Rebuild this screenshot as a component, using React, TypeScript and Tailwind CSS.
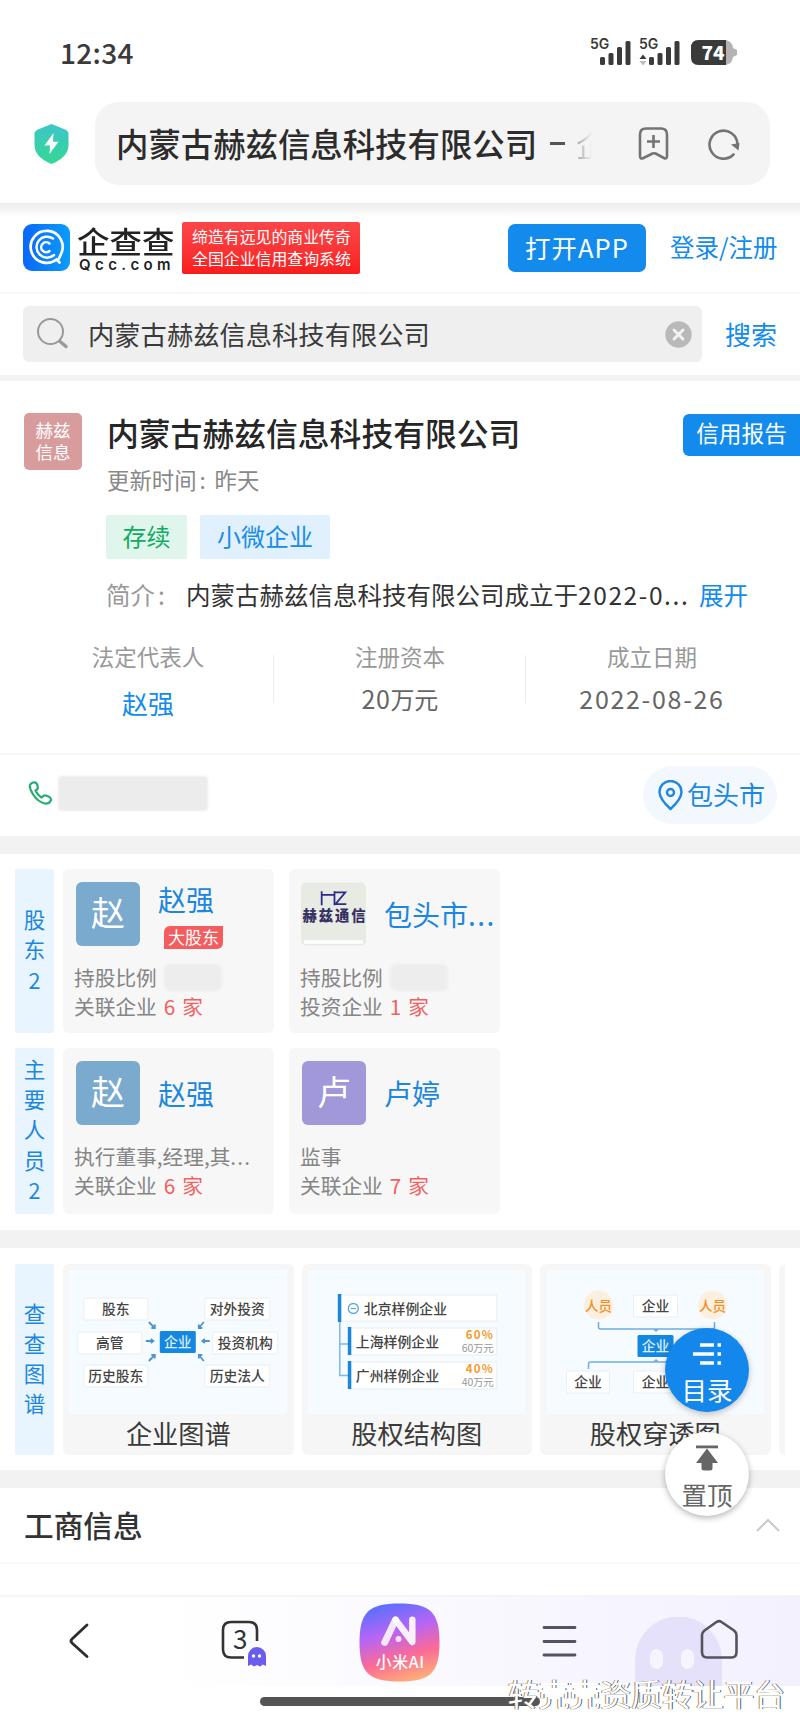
import { ReactNode } from "react";

type PersonCardProps = {
  avatar: ReactNode;
  name: ReactNode;
  badge?: string;
  line: ReactNode;
  masked?: boolean;
  relation: string;
  count: number;
};

const COMPANY = "内蒙古赫兹信息科技有限公司";

const SignalIcon = ({ data }: { data?: boolean }) => (
  <svg className="overflow-visible" width="44" height="32" viewBox="0 0 44 32">
    <text x="0" y="9.500" fontSize="14" fontWeight="600" fill="#3a3a3a" className="font-['Inter']">
      5G
    </text>
    {data && (
      <>
        <path d="M0.500 20 H7.500 L4 15.500 Z" fill="#3a3a3a" />
        <path d="M0.500 22 H7.500 L4 26.500 Z" fill="#bbb" />
      </>
    )}
    <rect x="10" y="18" width="5" height="8" rx="1.500" fill="#3a3a3a" />
    <rect x="18.500" y="14" width="5" height="12" rx="1.500" fill="#3a3a3a" />
    <rect x="27" y="8" width="5" height="18" rx="1.500" fill="#3a3a3a" />
    <rect x="35.500" y="2" width="5" height="24" rx="1.500" fill="#3a3a3a" />
  </svg>
);

const StatusBar = () => (
  <div className="h-[102px] shrink-0 flex items-start justify-between pl-[60px] pr-[62px]">
    <p className="mt-[38px] text-[28px] leading-[28px] font-medium tracking-[0.300px] text-[#3a3a3a]">12:34</p>
    <div className="mt-[39px] flex">
      <SignalIcon />
      <div className="ml-[5px]">
        <SignalIcon data />
      </div>
      <svg className="ml-[7px]" width="48" height="27" viewBox="0 0 48 27">
        <path d="M8 1 H34 Q42 1 43 9 L47 11 V16 L43 18 Q42 26 34 26 H8 Q1 26 1 18 V9 Q1 1 8 1Z" fill="#b3b3b3" />
        <path d="M9 1 H36 V26 H9 Q1 26 1 18 V9 Q1 1 9 1Z" fill="#3a3a3a" />
        <text x="11.500" y="20.500" fontSize="19" fontWeight="800" fill="#fff" textLength="23">
          74
        </text>
      </svg>
    </div>
  </div>
);

const AddressBar = () => (
  <div className="h-[101px] shrink-0 flex items-start pl-[34px]">
    <svg className="mt-[21px]" width="35" height="42" viewBox="0 0 35 42">
      <defs>
        <linearGradient id="shield" x1="0" y1="0" x2="0" y2="1">
          <stop offset="0" stopColor="#3cc6c9" />
          <stop offset="1" stopColor="#35d793" />
        </linearGradient>
      </defs>
      <path
        d="M17.500 1 L31 6.500 Q34.500 8 34.500 11 V22 Q34.500 34 17.500 41 Q0.500 34 0.500 22 V11 Q0.500 8 4 6.500Z"
        fill="url(#shield)"
      />
      <path d="M19.500 10 L10.500 22.500 H16 L15.500 31 L24.500 18.800 H19Z" fill="#fff" />
    </svg>
    <div className="ml-[26px] w-[675px] h-[83px] rounded-[24px] bg-[#f4f4f4] flex items-center pl-[21px]">
      <p className="text-[32.400px] leading-none font-medium text-[#2c2c2c] whitespace-nowrap">{COMPANY}</p>
      <span className="ml-[13px] w-[15px] h-[3px] bg-[#555]" />
      <p className="ml-[11px] w-[32px] -mr-[16px] text-[30px] leading-[40px] text-transparent bg-clip-text bg-gradient-to-r from-[#a5a5a5] to-[#f4f4f4] to-50% whitespace-nowrap">
        企
      </p>
      <svg className="ml-[46px]" width="32" height="36" viewBox="0 0 32 36" fill="none" stroke="#747474" strokeWidth="2.600">
        <path d="M8 2.500 H23 Q29 2.500 29 8.500 V30 Q29 33.500 26 32 L17.500 27.500 Q16 27 14.500 27.500 L5.500 32 Q2 33.500 2 30 V8.500 Q2 2.500 8 2.500Z" />
        <path d="M15.500 9 V22 M9 15.500 H22" />
      </svg>
      <svg className="ml-[37px]" width="34" height="34" viewBox="0 0 34 34" fill="none">
        <path d="M26.500 27.500 A14 14 0 1 1 30.500 17" stroke="#747474" strokeWidth="2.600" strokeLinecap="round" />
        <path d="M24 17.500 L32.500 16 L31.500 23.500Z" fill="#747474" />
      </svg>
    </div>
  </div>
);

const SiteHeader = () => (
  <div className="h-[91px] shrink-0 flex items-start pl-[23px] pt-[19px] border-b-2 border-[#f7f7f7] bg-gradient-to-b from-[#ebebeb] from-0% to-white to-[14px]">
    <svg className="mt-[2px]" width="47" height="47" viewBox="0 0 47 47" fill="none">
      <defs>
        <linearGradient id="logo" x1="0" y1="0" x2="1" y2="0">
          <stop offset="0" stopColor="#0b66fb" />
          <stop offset="1" stopColor="#0a9dfb" />
        </linearGradient>
      </defs>
      <rect width="47" height="47" rx="9" fill="url(#logo)" />
      <g stroke="#fff" strokeLinecap="round">
        <path d="M36.500 38.500 L33.500 35.500 A16 16 0 1 1 38 30 L36 34.500" strokeWidth="2.700" />
        <path d="M30 14.500 A10.500 10.500 0 1 0 31 31" strokeWidth="2.500" />
        <path d="M26.500 19.500 A5 5 0 1 0 26.500 27" strokeWidth="2.500" />
      </g>
    </svg>
    <div className="ml-[7px] mt-[3px] w-[99px]">
      <p className="text-[32.500px] leading-[33px] h-[33px] origin-top scale-y-90 font-medium text-[#222] whitespace-nowrap">企查查</p>
      <p className="font-['Inter'] text-[15px] leading-[13px] pl-[2px] font-semibold tracking-[4.400px] text-[#222]">Qcc.com</p>
    </div>
    <div className="ml-[6px] w-[178px] h-[52px] rounded-[2px] bg-gradient-to-b from-[#fc4649] to-[#f81c1c] text-white text-[15.900px] leading-[22px] pl-[10px] pt-[4px] whitespace-nowrap">
      <p>缔造有远见的商业传奇</p>
      <p>全国企业信用查询系统</p>
    </div>
    <button className="ml-[148px] mt-[2px] w-[138px] h-[48px] rounded-[7px] bg-[#128bed] text-white text-[25.500px] leading-none pb-[2px] tracking-[1px]">
      打开APP
    </button>
    <a className="ml-[24px] mt-[13px] text-[24.500px] leading-none text-[#128bed] whitespace-nowrap">登录/注册</a>
  </div>
);

const SearchRow = () => (
  <div className="h-[87px] shrink-0 flex items-start pl-[23px] pt-[12px] border-b-[6px] border-[#f2f2f2]">
    <div className="w-[679px] h-[56px] rounded-[6px] bg-[#efefef] flex items-center pl-[13px]">
      <svg width="34" height="34" viewBox="0 0 34 34" fill="none" stroke="#999">
        <circle cx="14.500" cy="14.500" r="12.500" strokeWidth="2" />
        <path d="M24 24.500 L30 29.500" strokeWidth="3.500" strokeLinecap="round" />
      </svg>
      <p className="ml-[18px] text-[26.300px] leading-none text-[#3a3a3a]">{COMPANY}</p>
      <svg className="ml-auto mr-[10px]" width="27" height="27" viewBox="0 0 27 27">
        <circle cx="13.500" cy="13.500" r="13.200" fill="#b9b9b9" />
        <path d="M9 9 L18 18 M18 9 L9 18" stroke="#f2f2f2" strokeWidth="3" strokeLinecap="round" />
      </svg>
    </div>
    <a className="ml-[23px] mt-[15px] text-[26px] leading-none text-[#128bed]">搜索</a>
  </div>
);

const Fact = ({ label, children, link }: { label: string; children: ReactNode; link?: boolean }) => (
  <div className="w-[252px] flex flex-col items-center">
    <p className="text-[22.500px] leading-[22px] text-[#999]">{label}</p>
    {link ? (
      <a className="mt-[23px] text-[26px] leading-[26px] text-[#128bed]">{children}</a>
    ) : (
      <p className="mt-[19px] text-[25px] leading-[25px] text-[#666]">{children}</p>
    )}
  </div>
);

const CompanySummary = () => (
  <div className="h-[374px] shrink-0 border-b-2 border-[#f7f7f7]">
    <div className="flex pt-[32px] pl-[24px]">
      <div className="w-[58px] h-[57px] rounded-[5px] bg-[#d89c9d] text-white text-[17.500px] leading-[22px] text-center pt-[6px]">
        <p>赫兹</p>
        <p>信息</p>
      </div>
      <div className="ml-[25px] w-[576px] pt-[3px]">
        <h1 className="text-[31.800px] leading-[32px] font-medium text-[#262626]">{COMPANY}</h1>
        <p className="mt-[19px] text-[22.400px] leading-[24px] text-[#888]">
          更新时间<span className="inline-block w-[18px] pl-[3px]">:</span>昨天
        </p>
      </div>
      <button className="mt-px w-[117px] h-[42px] rounded-l-[6px] bg-[#128bed] text-white text-[22.700px] leading-none pb-[3px]">
        信用报告
      </button>
    </div>
    <div className="ml-[106px] mt-[24px] flex gap-[13px] text-[24px] leading-[41px] text-center">
      <span className="w-[81px] h-[44px] rounded-[2px] bg-[#e0f5eb] text-[#12ab63]">存续</span>
      <span className="w-[130px] h-[44px] rounded-[2px] bg-[#e0f0fc] text-[#1a8ce8]">小微企业</span>
    </div>
    <div className="ml-[106px] mt-[23px] flex text-[24.500px] leading-[25px] whitespace-nowrap">
      <span className="w-[80px] text-[#999]">
        简介<span className="pl-[3px]">:</span>
      </span>
      <span className="w-[513px] text-[#333]">
        {COMPANY}成立于<span className="tracking-[1.600px]">2022-0...</span>
      </span>
      <a className="text-[#128bed]">展开</a>
    </div>
    <div className="mt-[38px] ml-[22px] flex">
      <Fact label="法定代表人" link>
        赵强
      </Fact>
      <span className="-ml-px mt-[10px] w-px h-[48px] bg-[#ececec]" />
      <Fact label="注册资本">
        <span className="tracking-[0.500px]">20</span>
        <span className="text-[24px]">万元</span>
      </Fact>
      <span className="-ml-px mt-[10px] w-px h-[48px] bg-[#ececec]" />
      <Fact label="成立日期">
        <span className="tracking-[1.700px]">2022-08-26</span>
      </Fact>
    </div>
  </div>
);

const ContactRow = () => (
  <div className="h-[81px] shrink-0 flex items-start pl-[28px] pt-[11px]">
    <svg className="mt-[15px]" width="25" height="24" viewBox="0 0 25 24" fill="none" stroke="#24ad70" strokeWidth="2.200" strokeLinejoin="round">
      <path d="M5 1.500 Q9 0.500 9.800 6 Q10 8.500 7.500 9.500 Q9.500 14 13.500 16.500 Q15.500 14 18 14.500 Q23.500 16.500 23 19 Q21.500 23 17 22.500 Q10 21 5.500 14 Q1 7 2 4 Q3 2 5 1.500Z" />
    </svg>
    <div className="ml-[5px] mt-[10px] w-[150px] h-[35px] rounded-[4px] bg-[#ececec] blur-[1px]" />
    <div className="ml-[435px] w-[134px] h-[58px] rounded-full bg-[#f2f8fe] flex items-center pl-[15px] text-[#1e88e0]">
      <svg width="25" height="31" viewBox="0 0 25 31" fill="none" stroke="#1e88e0" strokeWidth="2.400">
        <path d="M12.500 29 Q1.500 19 1.500 12 A11 11 0 0 1 23.500 12 Q23.500 19 12.500 29Z" />
        <circle cx="12.500" cy="12.500" r="3.500" />
      </svg>
      <span className="relative -top-[1px] ml-[4px] text-[26px] leading-none">包头市</span>
    </div>
  </div>
);

const Gap = () => <div className="h-[18px] shrink-0 bg-[#f2f2f2]" />;

const SideLabel = ({ text }: { text: string }) => (
  <div className="w-[39px] shrink-0 rounded-[2px] bg-[#e8f4fe] flex flex-col items-center justify-center pb-[3px] text-[21.500px] leading-[30.200px] text-[#1b87dd]">
    {text.split("").map((char, i) => (
      <span key={i}>{char}</span>
    ))}
  </div>
);

const Avatar = ({ char, className }: { char: string; className: string }) => (
  <div className={`ml-px w-[64px] h-[64px] shrink-0 rounded-[6px] text-white text-[34px] leading-[59px] text-center ${className}`}>
    {char}
  </div>
);

const BrandAvatar = () => (
  <svg className="shrink-0" width="65" height="64" viewBox="0 0 66 64">
    <rect width="66" height="64" rx="5" fill="#e7ebe3" />
    <path d="M3 60.500 H63" stroke="#fff" strokeWidth="3.500" />
    <path d="M21 23 V9 M21 12.500 H34 M34 23 V9 M34 10 H45 L35 22 H46" fill="none" stroke="#2d2a8c" strokeWidth="1.800" />
    <text x="1.500" y="39.500" fontSize="14.500" fontWeight="900" fill="#373063" textLength="64">
      赫兹通信
    </text>
  </svg>
);

const PersonCard = ({ avatar, name, badge, line, masked, relation, count }: PersonCardProps) => (
  <div className="w-[211px] shrink-0 rounded-[6px] bg-[#f7f7f7] pl-[12px] pt-[13px] text-[20.700px] text-[#858585]">
    <div className="h-[64px] flex">
      {avatar}
      <div className="w-[120px] ml-[18px] flex flex-col justify-center">
        <p className="text-[28px] leading-[28px] text-[#1b87dd] whitespace-nowrap">{name}</p>
        {badge && (
          <span className="mt-[13px] -mb-[5px] ml-[6px] w-[59px] h-[23px] rounded-tl-[6px] rounded-br-[6px] bg-[#f45c5e] text-white text-[17px] leading-[21px] text-center">
            {badge}
          </span>
        )}
      </div>
    </div>
    <div className="-ml-px mt-[16px] h-[30px] flex items-center leading-[30px] whitespace-nowrap">
      {line}
      {masked && <span className="ml-[7px] w-[58px] h-[27px] rounded-[6px] bg-[#ededed] blur-[1px]" />}
    </div>
    <p className="-ml-px leading-[29px]">
      {relation}
      <span className="ml-[7px] text-[#f2605f]">{count}</span>
      <span className="ml-[7px] text-[#f2605f]">家</span>
    </p>
  </div>
);

type NodeBoxProps = { x: number; y: number; w: number; h?: number; text: string; active?: boolean };

const NodeBox = ({ x, y, w, h = 22, text, active }: NodeBoxProps) => (
  <g>
    <rect x={x} y={y} width={w} height={h} rx="1.500" fill={active ? "#1487e0" : "#fff"} stroke={active ? "none" : "#e8eef2"} />
    <text x={x + w / 2} y={y + h / 2 + 5} fontSize="13.800" fontWeight="500" textAnchor="middle" fill={active ? "#d9eeff" : "#444"}>
      {text}
    </text>
  </g>
);

const RelationDiagram = () => (
  <svg width="218" height="144" viewBox="-0.800 0 218 144">
    <rect x="-1" width="219" height="144" fill="#f6fbff" />
    <NodeBox x={14} y={28} w={64} text="股东" />
    <NodeBox x={8} y={62} w={64} text="高管" />
    <NodeBox x={14} y={95} w={64} text="历史股东" />
    <NodeBox x={135} y={28} w={65} text="对外投资" />
    <NodeBox x={143} y={62} w={65} text="投资机构" />
    <NodeBox x={135} y={95} w={65} text="历史法人" />
    <NodeBox x={90} y={61} w={36} text="企业" active />
    <g stroke="#4a94cf" strokeWidth="1.800" fill="none">
      <path d="M79 52 L85 58 M85 54.500 V58 H81.500" />
      <path d="M76 71 H83 M81 69 L83.500 71 L81 73" />
      <path d="M79 91 L85 85 M81.500 85 H85 V88.500" />
      <path d="M134 52 L129 58 M129 54.500 V58 H132.500" />
      <path d="M140 71 H133 M135 69 L132.500 71 L135 73" />
      <path d="M134 91 L129 85 M132.500 85 H129 V88.500" />
    </g>
  </svg>
);

const EquityDiagram = () => (
  <svg width="218" height="144" viewBox="-0.800 0 218 144">
    <rect x="-1" width="219" height="144" fill="#f6fbff" />
    <g fill="#fff" stroke="#e8eef2">
      <rect x="31" y="25" width="157" height="26" />
      <rect x="41" y="58" width="147" height="27" />
      <rect x="41" y="92" width="147" height="27" />
    </g>
    <path d="M31 52 V105.500 H40 M31 74 H40" fill="none" stroke="#7bb8e8" strokeWidth="1.500" />
    <g fill="#1a86dc">
      <rect x="29" y="24" width="3.500" height="28" />
      <rect x="39" y="57" width="3.500" height="28" />
      <rect x="39" y="91" width="3.500" height="28" />
    </g>
    <circle cx="44.500" cy="38.500" r="5" fill="none" stroke="#5ea5dd" strokeWidth="1.300" />
    <path d="M42 38.500 H47" stroke="#5ea5dd" strokeWidth="1.300" />
    <g fontSize="13.900" fontWeight="500" fill="#444">
      <text x="55" y="44">北京样例企业</text>
      <text x="47" y="77">上海样例企业</text>
      <text x="47" y="111">广州样例企业</text>
    </g>
    <g fontSize="11.500" fontWeight="700" fill="#f39a2e">
      <text x="157" y="69" textLength="27">60%</text>
      <text x="157" y="103" textLength="27">40%</text>
    </g>
    <g fontSize="10.500" fill="#999">
      <text x="153" y="82" textLength="32">60万元</text>
      <text x="153" y="116" textLength="32">40万元</text>
    </g>
  </svg>
);

const PenetrationDiagram = () => (
  <svg width="218" height="144" viewBox="-0.500 0 218 144">
    <rect x="-1" width="219" height="144" fill="#f6fbff" />
    <circle cx="52" cy="35" r="14.500" fill="#fdefdf" />
    <circle cx="166" cy="35" r="14.500" fill="#fdefdf" />
    <g fontSize="13.500" fontWeight="500" fill="#f18f26" textAnchor="middle">
      <text x="52" y="40.500">人员</text>
      <text x="166" y="40.500">人员</text>
    </g>
    <path
      d="M52 52 V57 Q52 59 54 59 H166 Q168 59 168 57 V52 M42 99 V94 Q42 92 44 92 H176 M107 59 L109.500 61 L112 59 M107 92 L109.500 90 L112 92"
      fill="none"
      stroke="#6dafe0"
      strokeWidth="1.500"
    />
    <NodeBox x={87} y={25} w={44} text="企业" />
    <NodeBox x={91} y={65} w={36} text="企业" active />
    <NodeBox x={20} y={101} w={43} text="企业" />
    <NodeBox x={87} y={101} w={44} text="企业" />
  </svg>
);

const GraphCard = ({ title, children }: { title: string; children: ReactNode }) => (
  <div className="w-[230.500px] shrink-0 rounded-[6px] bg-[#f6f6f6] pt-[6px] flex flex-col items-center">
    {children}
    <p className="mt-[5px] text-[26.200px] leading-[28px] text-[#3a3a3a]">{title}</p>
  </div>
);

const FloatingButtons = () => (
  <div className="absolute left-[665px] top-[1328px] flex flex-col gap-[20px]">
    <button className="w-[84px] h-[84px] rounded-full bg-[#1487ec] shadow-[0_2px_6px_rgba(0,0,0,0.25)] flex flex-col items-center text-white">
      <svg className="mt-[14px]" width="30" height="24" viewBox="0 0 30 24" stroke="#fff" strokeWidth="3.400">
        <path d="M8 3 H22 M1 12 H22 M8 21 H22 M25.500 3 H29 M25.500 12 H29 M25.500 21 H29" />
      </svg>
      <span className="mt-[10px] text-[25.500px] leading-[25px]">目录</span>
    </button>
    <button className="w-[84px] h-[84px] rounded-full bg-white shadow-[0_2px_6px_rgba(0,0,0,0.3)] flex flex-col items-center text-[#666]">
      <svg className="mt-[13px]" width="24" height="26" viewBox="0 0 24 26" fill="#666">
        <rect x="1" y="0.500" width="22" height="2.800" />
        <path d="M12 3.500 L23 18 H17.500 V23 Q17.500 25.500 15 25.500 H9 Q6.500 25.500 6.500 23 V18 H1Z" />
      </svg>
      <span className="mt-[10px] text-[25.500px] leading-[25px]">置顶</span>
    </button>
  </div>
);

const BottomBar = () => (
  <div className="relative h-[124px] shrink-0">
    <div className="relative h-[91px] border-t-2 border-[#f5f5f8] bg-gradient-to-r from-white from-20% to-[#f3f1fe] overflow-hidden">
      {/* pale mascot behind the home button */}
      <svg className="absolute left-[635px] top-[20px]" width="87" height="70" viewBox="0 0 87 70">
        <path d="M0 70 V43 A43 43 0 0 1 87 43 V70Z" fill="#e6e1fb" />
        <rect x="15" y="32" width="13" height="20" rx="6.500" fill="#f6f4fe" />
        <rect x="46" y="32" width="13" height="20" rx="6.500" fill="#f6f4fe" />
      </svg>
      <div className="relative flex items-start">
        <svg className="ml-[68px] mt-[25px]" width="22" height="38" viewBox="0 0 22 38" fill="none">
          <path d="M19 3 L4 17 Q2 19 4 21 L19 34.500" stroke="#2e2e2e" strokeWidth="2.800" strokeLinecap="round" />
        </svg>
        <svg className="ml-[131px] mt-[22px]" width="46" height="50" viewBox="0 0 46 50" fill="none">
          <path d="M23 38.500 H10 Q2 38.500 2 30.500 V11 Q2 3 10 3 H28 Q36 3 36 11 V22" stroke="#333" strokeWidth="2.600" />
          <text x="12" y="30" fontSize="26" fill="#333">
            3
          </text>
          <path d="M27 47 V37 A9 9 0 0 1 45 37 V47 L42 45.500 L39 47.500 L36 46 L33 47.500 L30 45.500Z" fill="#6a5cf0" />
          <circle cx="32.500" cy="37" r="1.700" fill="#fff" />
          <circle cx="38.500" cy="37" r="1.700" fill="#fff" />
        </svg>
        <svg className="ml-[92px] mt-[6px]" width="81" height="79" viewBox="0 0 82 80">
          <defs>
            <linearGradient id="ai" x1="0.350" y1="0" x2="0.650" y2="1">
              <stop offset="0" stopColor="#5a70fc" />
              <stop offset="0.350" stopColor="#b565f6" />
              <stop offset="0.680" stopColor="#fb6a96" />
              <stop offset="1" stopColor="#fdaf78" />
            </linearGradient>
          </defs>
          <path
            d="M41 0.500 C72 0.500 81.500 9 81.500 40 C81.500 71 72 79.500 41 79.500 C10 79.500 0.500 71 0.500 40 C0.500 9 10 0.500 41 0.500Z"
            fill="url(#ai)"
          />
          <path d="M26 40 L37 17" stroke="#fff" strokeOpacity="0.850" strokeWidth="7" strokeLinecap="round" />
          <path
            d="M37 17 L54 39.500 V17"
            fill="none"
            stroke="#fff"
            strokeOpacity="0.900"
            strokeWidth="6.500"
            strokeLinecap="round"
            strokeLinejoin="round"
          />
          <circle cx="40" cy="36.500" r="3" fill="#fff" fillOpacity="0.800" />
          <text x="17" y="66" fontSize="16" fontWeight="500" fill="#fff" textLength="49">
            小米AI
          </text>
        </svg>
        <svg className="ml-[101px] mt-[28px]" width="36" height="34" viewBox="0 0 36 34">
          <path d="M3 2.500 H34 M3 16.500 H34 M3 30 H34" stroke="#55535c" strokeWidth="2.800" strokeLinecap="round" />
        </svg>
        <svg className="ml-[123px] mt-[22px]" width="38" height="41" viewBox="0 0 38 41" fill="none">
          <path
            d="M16.500 3 Q19 1.200 21.500 3 L34 11.500 Q36.500 13.500 36.500 16 V33 Q36.500 38.500 31.500 38.500 H7 Q2 38.500 2 33 V16 Q2 13.500 4.500 11.500Z"
            stroke="#55535c"
            strokeWidth="2.600"
          />
        </svg>
      </div>
    </div>
    <div className="mt-[11px] ml-[260px] w-[280px] h-[9px] rounded-full bg-[#555]" />
    <p className="absolute left-[508px] top-[82px] text-[30.800px] leading-[32px] text-white whitespace-nowrap [text-shadow:-1px_0_0_#b98a45,1px_0_0_#2f62a0]">
      转壳壳资质转让平台
    </p>
  </div>
);

export default function App() {
  return (
    <div className="relative w-[800px] h-[1718px] overflow-hidden bg-white flex flex-col font-['Noto_Sans_CJK_SC',sans-serif]">
      <StatusBar />
      <AddressBar />
      <SiteHeader />
      <SearchRow />
      <CompanySummary />
      <ContactRow />
      <Gap />
      <div className="h-[376px] shrink-0 pl-[15px] pt-[15px]">
        <div className="h-[164px] flex">
          <SideLabel text="股东2" />
          <div className="ml-[9px] flex gap-[15px]">
            <PersonCard
              avatar={<Avatar char="赵" className="bg-[#7aaace]" />}
              name="赵强"
              badge="大股东"
              line="持股比例"
              masked
              relation="关联企业"
              count={6}
            />
            <PersonCard
              avatar={<BrandAvatar />}
              name={
                <>
                  包头市<span className="tracking-[1.500px]">...</span>
                </>
              }
              line="持股比例"
              masked
              relation="投资企业"
              count={1}
            />
          </div>
        </div>
        <div className="mt-[15px] h-[166px] flex">
          <SideLabel text="主要人员2" />
          <div className="ml-[9px] flex gap-[15px]">
            <PersonCard
              avatar={<Avatar char="赵" className="bg-[#7aaace]" />}
              name="赵强"
              line={
                <>
                  执行董事,经理,其<span className="tracking-[1.200px]">...</span>
                </>
              }
              relation="关联企业"
              count={6}
            />
            <PersonCard avatar={<Avatar char="卢" className="bg-[#a198da]" />} name="卢婷" line="监事" relation="关联企业" count={7} />
          </div>
        </div>
      </div>
      <Gap />
      <div className="h-[222px] shrink-0 flex pl-[15px] pr-[15px] pt-[16px] pb-[15px] overflow-hidden">
        <SideLabel text="查查图谱" />
        <div className="ml-[9px] flex gap-[8px] overflow-hidden">
          <GraphCard title="企业图谱">
            <RelationDiagram />
          </GraphCard>
          <GraphCard title="股权结构图">
            <EquityDiagram />
          </GraphCard>
          <GraphCard title="股权穿透图">
            <PenetrationDiagram />
          </GraphCard>
          <div className="w-[20px] shrink-0 rounded-l-[6px] bg-[#f6f6f6]" />
        </div>
      </div>
      <Gap />
      <div className="h-[76px] shrink-0 flex items-center justify-between pl-[24px] pr-[20px] border-b-2 border-[#f9f9f9]">
        <h2 className="text-[29.700px] leading-none font-medium text-[#333]">工商信息</h2>
        <svg width="24" height="14" viewBox="0 0 24 14" fill="none">
          <path d="M1 13 L12 2 L23 13" stroke="#ccc" strokeWidth="2.200" />
        </svg>
      </div>
      <div className="h-[31px] shrink-0" />
      <BottomBar />
      <FloatingButtons />
    </div>
  );
}
